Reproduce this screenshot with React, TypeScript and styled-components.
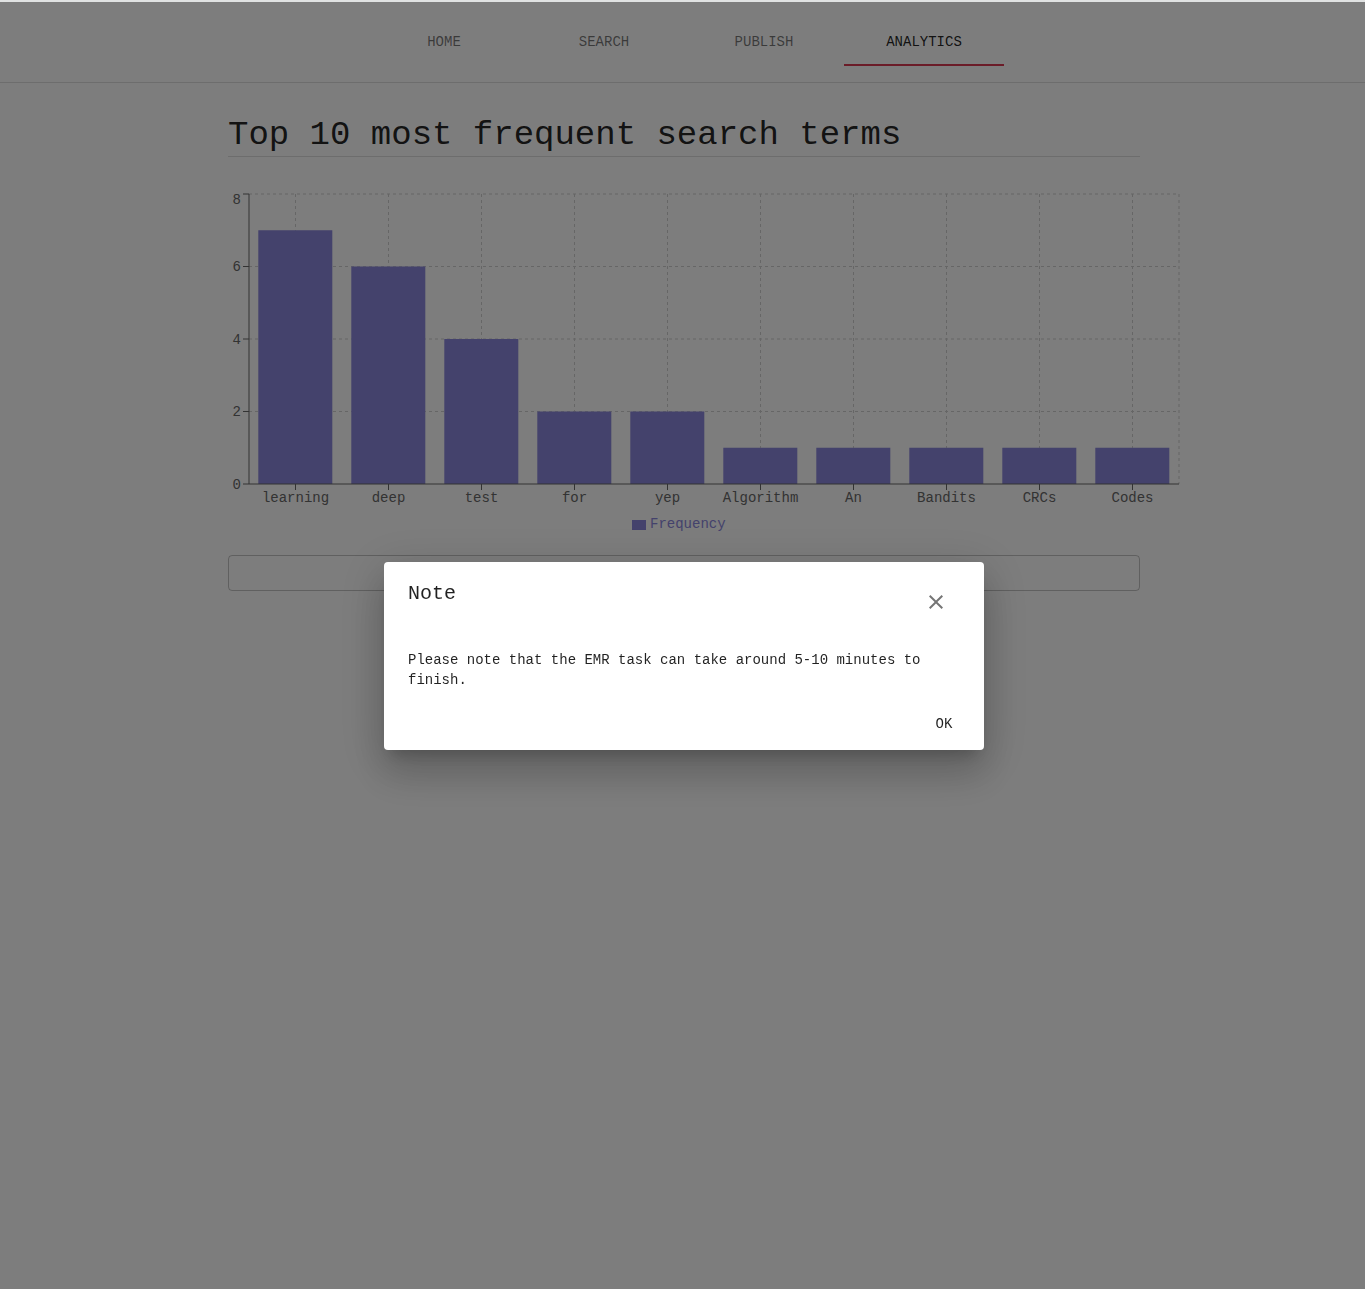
import React from 'react';
import styled, { createGlobalStyle } from 'styled-components';

const mono = '"Liberation Mono", "Courier New", monospace';
const textPrimary = 'rgba(0, 0, 0, 0.87)';
const divider = 'rgba(0, 0, 0, 0.12)';
const gutter = '3px';

const GlobalStyle = createGlobalStyle`
  *, *::before, *::after { box-sizing: border-box; }
  body {
    margin: 0;
    background: #fafafa;
    color: ${textPrimary};
    font-family: ${mono};
    font-size: 14px;
    line-height: 20px;
  }
  button { font: inherit; color: inherit; background: none; border: 0; padding: 0; cursor: pointer; }
`;

const Page = styled.div`
  min-height: 100vh;
  border-top: 2px solid #e0e2e2;
  background: #fafafa;
`;

const Header = styled.header`
  display: flex;
  justify-content: center;
  padding: 16px 0 16px ${gutter};
  border-bottom: 1px solid ${divider};
`;

const Tabs = styled.nav`
  display: flex;
`;

const Tab = styled.a<{ $active?: boolean }>`
  display: flex;
  align-items: center;
  justify-content: center;
  width: 160px;
  height: 48px;
  color: ${(p) => (p.$active ? textPrimary : 'rgba(0, 0, 0, 0.54)')};
  box-shadow: ${(p) => (p.$active ? 'inset 0 -2px #d73850' : 'none')};
  text-decoration: none;
  text-transform: uppercase;
`;

const Main = styled.main`
  padding-left: ${gutter};
`;

const Content = styled.div`
  max-width: 960px;
  margin: 0 auto;
  padding: 32px 24px;
`;

const Title = styled.h1`
  margin: 0 0 24px;
  border-bottom: 1px solid ${divider};
  font-size: 34px;
  font-weight: 400;
  line-height: 41px;
`;

const Chart = styled.svg`
  display: block;
  margin-bottom: 16px;
  font-size: 14px;
`;

const OutlinedButton = styled.button`
  display: block;
  width: 100%;
  height: 36px;
  border: 1px solid rgba(0, 0, 0, 0.23);
  border-radius: 4px;
`;

const Backdrop = styled.div`
  position: fixed;
  inset: 2px 0 0;
  display: flex;
  align-items: center;
  justify-content: center;
  padding: 21px 0 0 ${gutter};
  background: rgba(0, 0, 0, 0.5);
`;

const Dialog = styled.section`
  width: 100%;
  max-width: 600px;
  border-radius: 4px;
  background: #fff;
  box-shadow:
    0 11px 15px -7px rgba(0, 0, 0, 0.2),
    0 24px 38px 3px rgba(0, 0, 0, 0.14),
    0 9px 46px 8px rgba(0, 0, 0, 0.12);
`;

const DialogHeader = styled.header`
  display: flex;
  align-items: flex-start;
  justify-content: space-between;
  padding: 16px 24px;
`;

const DialogTitle = styled.h2`
  margin: 0;
  font-size: 20px;
  font-weight: 400;
  line-height: 32px;
`;

const IconButton = styled.button`
  display: flex;
  padding: 12px;
  color: rgba(0, 0, 0, 0.54);
`;

const DialogText = styled.p`
  margin: 0;
  padding: 8px 24px;
`;

const DialogActions = styled.footer`
  display: flex;
  justify-content: flex-end;
  padding: 8px;
`;

const TextButton = styled.button`
  min-width: 64px;
  height: 36px;
`;

const tabs = ['Home', 'Search', 'Publish', 'Analytics'];

const terms = [
  { name: 'learning', count: 7 },
  { name: 'deep', count: 6 },
  { name: 'test', count: 4 },
  { name: 'for', count: 2 },
  { name: 'yep', count: 2 },
  { name: 'Algorithm', count: 1 },
  { name: 'An', count: 1 },
  { name: 'Bandits', count: 1 },
  { name: 'CRCs', count: 1 },
  { name: 'Codes', count: 1 },
];

const plot = { left: 21, right: 951, top: 13, bottom: 303 };
const band = (plot.right - plot.left) / terms.length;
const unit = (plot.bottom - plot.top) / 8;
const yOf = (value: number) => plot.bottom - value * unit;
const centerOf = (i: number) => plot.left + band * (i + 0.5);

function FrequencyChart() {
  return (
    <Chart width={956} height={358} role="img" aria-label="Search term frequency">
      <g stroke="#ccc" strokeDasharray="3 3">
        {[2, 4, 6, 8].map((v) => (
          <line key={v} x1={plot.left} x2={plot.right} y1={yOf(v)} y2={yOf(v)} />
        ))}
        {terms.map((t, i) => (
          <line key={t.name} x1={centerOf(i)} x2={centerOf(i)} y1={plot.top} y2={plot.bottom} />
        ))}
        <line x1={plot.right} x2={plot.right} y1={plot.top} y2={plot.bottom} />
      </g>
      <g fill="#8884d8">
        {terms.map((t, i) => (
          <rect
            key={t.name}
            x={plot.left + band * (i + 0.1)}
            y={yOf(t.count)}
            width={Math.floor(band * 0.8)}
            height={t.count * unit}
          />
        ))}
      </g>
      <g stroke="#666">
        <line x1={plot.left} x2={plot.right} y1={plot.bottom} y2={plot.bottom} />
        <line x1={plot.left} x2={plot.left} y1={plot.top} y2={plot.bottom} />
        {[0, 2, 4, 6, 8].map((v) => (
          <line key={v} x1={plot.left - 6} x2={plot.left} y1={yOf(v)} y2={yOf(v)} />
        ))}
        {terms.map((t, i) => (
          <line key={t.name} x1={centerOf(i)} x2={centerOf(i)} y1={plot.bottom} y2={plot.bottom + 6} />
        ))}
      </g>
      <g fill="#666" textAnchor="end">
        {[0, 2, 4, 6, 8].map((v) => (
          <text key={v} x={plot.left - 8} y={Math.max(Math.floor(yOf(v)) + 5, 23)}>
            {v}
          </text>
        ))}
      </g>
      <g fill="#666" textAnchor="middle">
        {terms.map((t, i) => (
          <text key={t.name} x={centerOf(i)} y={plot.bottom + 18}>
            {t.name}
          </text>
        ))}
      </g>
      <g fill="#8884d8">
        <rect x={404} y={339} width={14} height={10} />
        <text x={422} y={347}>
          Frequency
        </text>
      </g>
    </Chart>
  );
}

export default function App() {
  return (
    <>
      <GlobalStyle />
      <Page>
        <Header>
          <Tabs aria-label="Main">
            {tabs.map((tab) => (
              <Tab key={tab} href={`#${tab.toLowerCase()}`} $active={tab === 'Analytics'}>
                {tab}
              </Tab>
            ))}
          </Tabs>
        </Header>
        <Main>
          <Content>
            <Title>Top 10 most frequent search terms</Title>
            <FrequencyChart />
            <OutlinedButton type="button" aria-label="Run task" />
          </Content>
        </Main>
      </Page>
      <Backdrop>
        <Dialog role="dialog" aria-modal="true" aria-labelledby="note-title">
          <DialogHeader>
            <DialogTitle id="note-title">Note</DialogTitle>
            <IconButton type="button" aria-label="Close">
              <svg width="24" height="24" viewBox="0 0 24 24" fill="currentColor" aria-hidden="true">
                <path d="M19 6.41L17.59 5 12 10.59 6.41 5 5 6.41 10.59 12 5 17.59 6.41 19 12 13.41 17.59 19 19 17.59 13.41 12z" />
              </svg>
            </IconButton>
          </DialogHeader>
          <DialogText>
            Please note that the EMR task can take around 5-10 minutes to finish.
          </DialogText>
          <DialogActions>
            <TextButton type="button">OK</TextButton>
          </DialogActions>
        </Dialog>
      </Backdrop>
    </>
  );
}
